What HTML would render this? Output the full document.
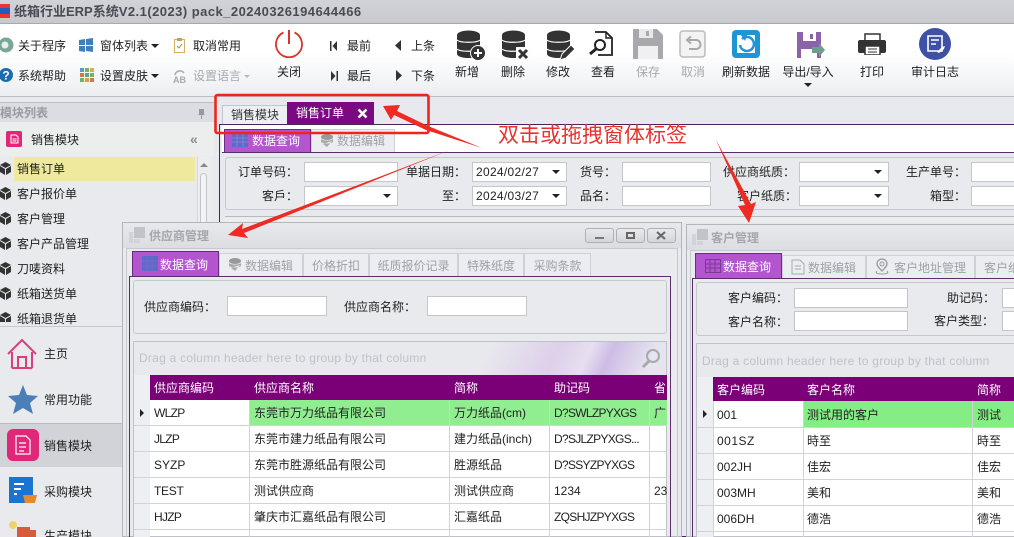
<!DOCTYPE html>
<html><head><meta charset="utf-8">
<style>
html,body{margin:0;padding:0;width:1014px;height:537px;overflow:hidden}
#r{width:1014px;height:537px;overflow:hidden;position:relative;background:#e8e9ee;font-family:"Liberation Sans","Noto Sans CJK SC",sans-serif;font-size:12px;color:#222}
.a,.t,svg{position:absolute}
.t{white-space:nowrap;line-height:16px;height:16px}
.c{text-align:center;transform:translateX(-50%)}
.g{color:#a8a8b0}
.w{color:#fff}
.inp{position:absolute;background:#fff;border:1px solid #c4c6cc;box-sizing:border-box}
.arr:after{content:"";position:absolute;right:6px;top:7px;border:4px solid transparent;border-top:4px solid #222;border-bottom:0}
.tab{position:absolute;background:#ecedf1;border:1px solid #cfd0d6;border-bottom:0;box-sizing:border-box;color:#a0a0a8;line-height:22px;white-space:nowrap}
.on{background:#b455d0;border:1px solid #6d2a80;border-bottom:0;color:#fff}
.panel{position:absolute;background:#e9eaee;border:1px solid #c6c8cc;border-radius:3px;box-sizing:border-box}
.hd{position:absolute;background:#7b0078}
.ln{position:absolute;background:#d2d3d7}
.blk{position:absolute;width:0;height:0}
.n{letter-spacing:-.7px}
</style></head><body><div id="r">

<!-- title bar -->
<div class="a" style="left:0;top:0;width:1014px;height:24px;background:linear-gradient(#d2d3d8,#c8c9ce);border-bottom:1px solid #a8a9ae;box-sizing:border-box"></div>
<div class="a" style="left:0;top:4px;width:10px;height:14px;background:linear-gradient(#e33 0 30%,#235bc0 30% 70%,#e33 70%)"></div>
<div class="t" style="left:14px;top:4px;font-weight:bold;font-size:13px;color:#4a4a55">纸箱行业ERP系统<span style="letter-spacing:.46px">V2.1(2023) pack_20240326194644466</span></div>

<!-- ribbon -->
<div class="a" style="left:0;top:24px;width:1014px;height:73px;background:linear-gradient(#fff 0,#fff 40%,#eceef1 100%);border-bottom:1px solid #bcbdc2;box-sizing:border-box"></div>

<svg style="left:0;top:36px" width="15" height="17"><circle cx="6" cy="9" r="7.500" fill="#7aa898"/><circle cx="5" cy="9" r="3.500" fill="#e8f0ec"/></svg>
<div class="t" style="left:18px;top:38px">关于程序</div>
<svg style="left:78px;top:37px" width="16" height="16"><path d="M1 3l6-1v6H1zM8 2l7-1v7H8zM1 9h6v6l-6-1zM8 9h7v6l-7-1z" fill="#3d7fc0"/></svg>
<div class="t" style="left:100px;top:38px">窗体列表</div>
<div class="blk" style="left:151px;top:44px;border:4px solid transparent;border-top:4px solid #222;border-bottom:0"></div>
<svg style="left:173px;top:37px" width="14" height="17"><rect x="1.500" y="2.500" width="10" height="13" fill="#fff" stroke="#d4b060"/><rect x="4" y="1" width="5" height="3" fill="#c8a050"/><path d="M4 9l2 2 3-4" stroke="#7a9a70" fill="none"/></svg>
<div class="t" style="left:193px;top:38px">取消常用</div>

<svg style="left:0;top:67px" width="14" height="16"><circle cx="6" cy="8" r="7" fill="#1c6db0"/><text x="6" y="12.500" font-size="12" font-weight="bold" fill="#fff" text-anchor="middle" font-family="Liberation Sans">?</text></svg>
<div class="t" style="left:18px;top:68px">系统帮助</div>
<svg style="left:80px;top:68px" width="15" height="15"><rect x="0" y="0" width="4" height="4" fill="#5a9ec0"/><rect x="5" y="0" width="4" height="4" fill="#7ab060"/><rect x="10" y="0" width="4" height="4" fill="#d0b050"/><rect x="0" y="5" width="4" height="4" fill="#c87a50"/><rect x="5" y="5" width="4" height="4" fill="#60a090"/><rect x="10" y="5" width="4" height="4" fill="#7ab060"/><rect x="0" y="10" width="4" height="4" fill="#7ab060"/><rect x="5" y="10" width="4" height="4" fill="#d8a040"/><rect x="10" y="10" width="4" height="4" fill="#c87a50"/></svg>
<div class="t" style="left:100px;top:68px">设置皮肤</div>
<div class="blk" style="left:151px;top:74px;border:4px solid transparent;border-top:4px solid #222;border-bottom:0"></div>
<svg style="left:172px;top:68px" width="16" height="16"><path d="M3 7a5 5 0 0 1 9-2" stroke="#aaa" stroke-width="1.500" fill="none"/><text x="1" y="15" font-size="9" font-weight="bold" fill="#aaa" font-family="Liberation Sans">AB</text></svg>
<div class="t g" style="left:193px;top:68px">设置语言</div>
<div class="blk" style="left:244px;top:75px;border:3px solid transparent;border-top:3px solid #bbb;border-bottom:0"></div>

<svg style="left:274px;top:29px" width="30" height="30"><path d="M9.500 3.500a13 13 0 1 0 11 0" fill="none" stroke="#d8342c" stroke-width="1.800"/><path d="M15 1v14" stroke="#d8342c" stroke-width="2"/></svg>
<div class="t c" style="left:289px;top:64px">关闭</div>

<svg style="left:329px;top:39px" width="10" height="14"><path d="M1 2h1.500v10H1zM8 2v10L3.500 7z" fill="#333"/></svg>
<div class="t" style="left:347px;top:38px">最前</div>
<svg style="left:394px;top:39px" width="8" height="14"><path d="M7 1v11L1 6.500z" fill="#333"/></svg>
<div class="t" style="left:411px;top:38px">上条</div>
<svg style="left:329px;top:69px" width="10" height="14"><path d="M2 2v10l4.500-5zM7.500 2H9v10H7.500z" fill="#333"/></svg>
<div class="t" style="left:347px;top:68px">最后</div>
<svg style="left:395px;top:69px" width="8" height="14"><path d="M1 1v11l6-5.500z" fill="#333"/></svg>
<div class="t" style="left:411px;top:68px">下条</div>

<!-- db icons -->
<svg style="left:456px;top:30px" width="30" height="31"><path d="M1 5a11.500 4.500 0 0 1 23 0v19a11.500 4 0 0 1-23 0z" fill="#333"/><path d="M1 10c3 3 20 3 23 0M1 19c3 3 20 3 23 0" fill="none" stroke="#fff" stroke-width="1.200"/><circle cx="22" cy="23" r="7.500" fill="#333" stroke="#fff"/><path d="M18 23h8M22 19v8" stroke="#fff" stroke-width="2"/></svg>
<div class="t c" style="left:467px;top:64px">新增</div>
<svg style="left:501px;top:30px" width="30" height="31"><path d="M1 5a11.500 4.500 0 0 1 23 0v19a11.500 4 0 0 1-23 0z" fill="#333"/><path d="M1 10c3 3 20 3 23 0M1 19c3 3 20 3 23 0" fill="none" stroke="#fff" stroke-width="1.200"/><rect x="15" y="17" width="15" height="14" fill="#fcfcfd"/><path d="M18 20l8 8M26 20l-8 8" stroke="#333" stroke-width="3"/></svg>
<div class="t c" style="left:513px;top:64px">删除</div>
<svg style="left:546px;top:30px" width="30" height="31"><path d="M1 5a11.500 4.500 0 0 1 23 0v19a11.500 4 0 0 1-23 0z" fill="#333"/><path d="M1 10c3 3 20 3 23 0M1 19c3 3 20 3 23 0" fill="none" stroke="#fff" stroke-width="1.200"/><path d="M14 30l2-6 9-9 4 4-9 9z" fill="#333" stroke="#fff"/></svg>
<div class="t c" style="left:558px;top:64px">修改</div>
<svg style="left:587px;top:30px" width="28" height="28"><path d="M8 2h11l6 6v17H11" fill="none" stroke="#222" stroke-width="1.800"/><path d="M19 2v6h6" fill="none" stroke="#222" stroke-width="1.500"/><circle cx="13" cy="15" r="5" fill="#fff" stroke="#222" stroke-width="2"/><path d="M9 19l-6 5" stroke="#222" stroke-width="3"/></svg>
<div class="t c" style="left:603px;top:64px">查看</div>
<svg style="left:633px;top:29px" width="31" height="31"><path d="M0 0h24l6 6v24H0z" fill="#a9a9ad"/><rect x="6" y="0" width="14" height="9" fill="#e9e9ec"/><rect x="13" y="2" width="3" height="5" fill="#a9a9ad"/><rect x="5" y="17" width="20" height="13" fill="#f0f0f2"/></svg>
<div class="t c g" style="left:648px;top:64px">保存</div>
<svg style="left:679px;top:30px" width="28" height="28"><rect x="1" y="1" width="25" height="26" rx="3" fill="#f3f3f4" stroke="#bbb" stroke-width="1.500"/><path d="M10 10h7a4 4 0 0 1 0 9h-7M12 6.500l-4 3.500 4 3.500" fill="none" stroke="#a8a8a8" stroke-width="2"/></svg>
<div class="t c g" style="left:693px;top:64px">取消</div>
<svg style="left:732px;top:30px" width="29" height="28"><rect x="0" y="0" width="28" height="28" rx="4" fill="#2095d6"/><rect x="5" y="5" width="18" height="18" fill="#fff"/><path d="M10 9a7 7 0 1 1-2 6" fill="none" stroke="#2095d6" stroke-width="2.500"/><path d="M9 5l6 0-2 6z" fill="#2095d6"/></svg>
<div class="t c" style="left:746px;top:64px">刷新数据</div>
<svg style="left:796px;top:31px" width="29" height="29"><path d="M1 1h24v26H1z" fill="#8c62a8"/><rect x="7" y="1" width="13" height="9" fill="#fff"/><rect x="14" y="3" width="3" height="5" fill="#8c62a8"/><rect x="5" y="18" width="16" height="9" fill="#fff"/><path d="M16 16h7v-4l6 7-6 7v-4h-7z" fill="#6da08c"/></svg>
<div class="t c" style="left:808px;top:64px">导出/导入</div>
<div class="blk" style="left:804px;top:83px;border:4px solid transparent;border-top:4px solid #222;border-bottom:0"></div>
<svg style="left:858px;top:33px" width="29" height="22"><rect x="7" y="1" width="15" height="8" fill="#fff" stroke="#333" stroke-width="1.500"/><rect x="0" y="7" width="28" height="13" rx="2" fill="#333"/><rect x="7" y="13" width="15" height="9" fill="#fff" stroke="#333" stroke-width="1.500"/><path d="M10 16h9M10 19h9" stroke="#333"/></svg>
<div class="t c" style="left:872px;top:64px">打印</div>
<svg style="left:919px;top:28px" width="32" height="32"><circle cx="16" cy="16" r="16" fill="#3f51a5"/><path d="M9 8h14v15h-14z" fill="none" stroke="#fff" stroke-width="1.600"/><path d="M12 12h8M12 16h5" stroke="#fff" stroke-width="1.500"/><path d="M18 24l5-5 3-1-1 3-5 4z" fill="#fff"/></svg>
<div class="t c" style="left:935px;top:64px">审计日志</div>

<!-- sidebar -->
<div class="a" style="left:0;top:97px;width:214px;height:440px;background:#e9eaee"></div>
<div class="a" style="left:0;top:102px;width:214px;height:1px;background:#bcbdc2"></div>
<div class="a" style="left:0;top:103px;width:214px;height:19px;background:#dcdde2"></div>
<div class="t" style="left:0;top:105px;color:#9a9aa2;font-weight:bold">模块列表</div>
<svg style="left:197px;top:108px" width="9" height="11"><path d="M2 1h5v5l1 1H1l1-1zM4 7h1v4H4z" fill="#999"/></svg>
<div class="a" style="left:0;top:122px;width:214px;height:34px;background:#eceded"></div>
<svg style="left:6px;top:131px" width="17" height="17"><rect width="16" height="16" rx="2" fill="#e0287a"/><path d="M5 4h5l2 2v6H5zM6.500 8h4M6.500 10h4" fill="none" stroke="#fff"/></svg>
<div class="t" style="left:31px;top:132px">销售模块</div>
<div class="t" style="left:190px;top:131px;color:#8c8c94;font-weight:bold;font-size:14px">«</div>
<div class="a" style="left:14px;top:157px;width:181px;height:24px;background:#eee99c"></div>
<div class="a" style="left:197px;top:157px;width:13px;height:169px;background:#ecedf0;border-left:1px solid #d8d9dd"></div>
<div class="blk" style="left:200px;top:163px;border:4px solid transparent;border-bottom:4px solid #888;border-top:0"></div>
<div class="a" style="left:200px;top:173px;width:7px;height:60px;background:#f3f3f5;border:1px solid #c4c5c9;border-radius:4px;box-sizing:border-box"></div>
<svg style="left:0;top:162px" width="12" height="160"><g fill="#333"><path d="M5.500 0L11 3 5.500 6 0 3zM0 4l5 3v6L0 10zM11 4L6 7v6l5-3z"/><path transform="translate(0 25)" d="M5.500 0L11 3 5.500 6 0 3zM0 4l5 3v6L0 10zM11 4L6 7v6l5-3z"/><path transform="translate(0 50)" d="M5.500 0L11 3 5.500 6 0 3zM0 4l5 3v6L0 10zM11 4L6 7v6l5-3z"/><path transform="translate(0 75)" d="M5.500 0L11 3 5.500 6 0 3zM0 4l5 3v6L0 10zM11 4L6 7v6l5-3z"/><path transform="translate(0 100)" d="M5.500 0L11 3 5.500 6 0 3zM0 4l5 3v6L0 10zM11 4L6 7v6l5-3z"/><path transform="translate(0 125)" d="M5.500 0L11 3 5.500 6 0 3zM0 4l5 3v6L0 10zM11 4L6 7v6l5-3z"/><path transform="translate(0 150)" d="M5.500 0L11 3 5.500 6 0 3zM0 4l5 3v6L0 10zM11 4L6 7v6l5-3z"/></g></svg>
<div class="t" style="left:17px;top:161px">销售订单</div>
<div class="t" style="left:17px;top:186px">客户报价单</div>
<div class="t" style="left:17px;top:211px">客户管理</div>
<div class="t" style="left:17px;top:236px">客户产品管理</div>
<div class="t" style="left:17px;top:261px">刀唛资料</div>
<div class="t" style="left:17px;top:286px">纸箱送货单</div>
<div class="t" style="left:17px;top:311px;height:14px;overflow:hidden">纸箱退货单</div>
<div class="a" style="left:0;top:326px;width:214px;height:1px;background:#c8c9cd"></div>
<div class="a" style="left:0;top:423px;width:122px;height:44px;background:#d2d3d9;border-top:1px solid #b8b9be;box-sizing:border-box"></div>
<svg style="left:7px;top:338px" width="30" height="32"><path d="M1 16L15 2l14 14M5 14v14a1.500 1.500 0 0 0 2 2h16a1.500 1.500 0 0 0 2-2V14M11 30V19h8v11" fill="none" stroke="#d6407e" stroke-width="2"/></svg>
<div class="t" style="left:44px;top:346px">主页</div>
<svg style="left:8px;top:384px" width="30" height="30"><path d="M15 1l4 10 11 1-8 7 3 11-10-6-10 6 3-11-8-7 11-1z" fill="#4a7fb8"/></svg>
<div class="t" style="left:44px;top:392px">常用功能</div>
<svg style="left:7px;top:429px" width="32" height="33"><rect width="32" height="32" rx="6" fill="#e0287a"/><path d="M9 7h10l4 4v14H9zM12 14h7M12 18h7M12 22h5" fill="none" stroke="#fff" stroke-width="1.200"/></svg>
<div class="t" style="left:44px;top:438px">销售模块</div>
<svg style="left:9px;top:477px" width="29" height="30"><rect width="24" height="26" fill="#1b74d2"/><path d="M5 7h10M5 12h7M5 17h3" stroke="#fff" stroke-width="2"/><path d="M14 18h14l-2 8H16z" fill="#e88a2c"/></svg>
<div class="t" style="left:44px;top:484px">采购模块</div>
<svg style="left:7px;top:520px" width="30" height="17"><circle cx="6" cy="5" r="4" fill="#f3d06a"/><path d="M10 7h13v10H10zM23 10h6v7h-6z" fill="#d85a3a"/></svg>
<div class="t" style="left:44px;top:528px">生产模块</div>

<!-- main doc tabs -->
<div class="a" style="left:214px;top:97px;width:800px;height:440px;background:#e8e9ee"></div>
<div class="a" style="left:222px;top:105px;width:66px;height:20px;background:#eeeff2;border:1px solid #c4c5ca;border-bottom:0;box-sizing:border-box;text-align:center;line-height:19px;color:#333">销售模块</div>
<div class="a" style="left:287px;top:102px;width:87px;height:23px;background:#7a0a82;color:#fff;line-height:23px;padding-left:9px;box-sizing:border-box">销售订单</div>
<svg style="left:357px;top:108px" width="11" height="11"><path d="M1.500 1.500l8 8M9.500 1.500l-8 8" stroke="#fff" stroke-width="2.600"/></svg>
<div class="a" style="left:219px;top:124px;width:795px;height:413px;border:1px solid #4a2458;border-right:0;box-sizing:border-box"></div>
<div class="a" style="left:222px;top:125px;width:792px;height:27px;background:#fff"></div>
<div class="a" style="left:222px;top:152px;width:792px;height:1px;background:#5a2e68"></div>
<div class="tab on" style="left:224px;top:129px;width:87px;height:23px;padding-left:27px">数据查询</div>
<svg style="left:232px;top:134px" width="16" height="13"><rect width="16" height="13" fill="#5a6cc8"/><path d="M0 4h16M0 8h16M5 0v13M11 0v13" stroke="#8b7ed8"/></svg>
<div class="tab" style="left:311px;top:129px;width:84px;height:23px;padding-left:25px">数据编辑</div>
<svg style="left:320px;top:134px" width="14" height="14"><ellipse cx="7" cy="3" rx="6" ry="3" fill="#999"/><path d="M1 5c2 2 10 2 12 0v3C11 10 3 10 1 8zM3 10l4 3 5-6" fill="#aaa"/></svg>

<div class="panel" style="left:225px;top:157px;width:800px;height:53px"></div>
<div class="t" style="left:238px;top:164px">订单号码：</div><div class="inp" style="left:304px;top:162px;width:94px;height:20px"></div>
<div class="t" style="left:406px;top:164px">单据日期：</div>
<div class="inp arr" style="left:472px;top:162px;width:95px;height:20px;padding-left:3px;line-height:18px;letter-spacing:.3px">2024/02/27</div>
<div class="t" style="left:580px;top:164px">货号：</div><div class="inp" style="left:622px;top:162px;width:89px;height:20px"></div>
<div class="t" style="left:723px;top:164px">供应商纸质：</div><div class="inp arr" style="left:799px;top:162px;width:90px;height:20px"></div>
<div class="t" style="left:906px;top:164px">生产单号：</div><div class="inp" style="left:971px;top:162px;width:60px;height:20px"></div>
<div class="t" style="left:262px;top:188px">客戶：</div><div class="inp arr" style="left:304px;top:186px;width:94px;height:20px"></div>
<div class="t" style="left:442px;top:188px">至：</div>
<div class="inp arr" style="left:472px;top:186px;width:95px;height:20px;padding-left:3px;line-height:18px;letter-spacing:.3px">2024/03/27</div>
<div class="t" style="left:580px;top:188px">品名：</div><div class="inp" style="left:622px;top:186px;width:89px;height:20px"></div>
<div class="t" style="left:737px;top:188px">客户纸质：</div><div class="inp arr" style="left:799px;top:186px;width:90px;height:20px"></div>
<div class="t" style="left:930px;top:188px">箱型：</div><div class="inp" style="left:971px;top:186px;width:60px;height:20px"></div>
<div class="a" style="left:225px;top:216px;width:789px;height:6px;background:#eceded;border-top:1px solid #b8b9bd;box-sizing:border-box"></div>

<!-- supplier window -->
<div class="a" style="left:122px;top:222px;width:560px;height:315px;background:#e9eaee;border:1px solid #b4b5ba;box-sizing:border-box"></div>
<div class="a" style="left:123px;top:223px;width:558px;height:25px;background:linear-gradient(#e8e9ec,#dcdde1)"></div>
<svg style="left:129px;top:227px" width="17" height="17"><path d="M5 0h11v11H5z" fill="#c2c3c8"/><path d="M0 5h4v11H0zM5 12h6v4H5z" fill="#d2d3d8"/></svg>
<div class="t" style="left:149px;top:228px;font-weight:bold;color:#a5a6ad">供应商管理</div>
<div class="a" style="left:585px;top:228px;width:29px;height:15px;border:1px solid #aeb0b5;border-radius:3px;background:linear-gradient(#e9e9ed,#d4d5da);box-sizing:border-box"></div>
<div class="a" style="left:595px;top:237px;width:9px;height:2px;background:#777"></div>
<div class="a" style="left:616px;top:228px;width:29px;height:15px;border:1px solid #aeb0b5;border-radius:3px;background:linear-gradient(#e9e9ed,#d4d5da);box-sizing:border-box"></div>
<div class="a" style="left:626px;top:232px;width:9px;height:7px;border:2px solid #666;box-sizing:border-box"></div>
<div class="a" style="left:647px;top:228px;width:29px;height:15px;border:1px solid #aeb0b5;border-radius:3px;background:linear-gradient(#e9e9ed,#d4d5da);box-sizing:border-box"></div>
<svg style="left:656px;top:231px" width="11" height="9"><path d="M1 1l8 7M9 1L1 8" stroke="#666" stroke-width="2"/></svg>
<div class="a" style="left:126px;top:248px;width:552px;height:289px;border:1px solid #c8c9ce;border-bottom:0;box-sizing:border-box"></div>

<div class="tab on" style="left:132px;top:251px;width:87px;height:25px;padding-left:27px;line-height:27px">数据查询</div>
<svg style="left:142px;top:256px" width="16" height="15"><rect width="16" height="15" fill="#5a6cc8"/><path d="M0 5h16M0 10h16M5 0v15M10 0v15" stroke="#7a68c8"/></svg>
<div class="tab" style="left:219px;top:253px;width:84px;height:23px;padding-left:25px;line-height:25px">数据编辑</div>
<svg style="left:228px;top:258px" width="14" height="14"><ellipse cx="7" cy="3" rx="6" ry="3" fill="#999"/><path d="M1 5c2 2 10 2 12 0v3C11 10 3 10 1 8zM3 10l4 3 5-6" fill="#aaa"/></svg>
<div class="tab" style="left:303px;top:253px;width:66px;height:23px;text-align:center;line-height:25px">价格折扣</div>
<div class="tab" style="left:369px;top:253px;width:89px;height:23px;text-align:center;line-height:25px">纸质报价记录</div>
<div class="tab" style="left:458px;top:253px;width:66px;height:23px;text-align:center;line-height:25px">特殊纸度</div>
<div class="tab" style="left:524px;top:253px;width:67px;height:23px;text-align:center;line-height:25px">采购条款</div>
<div class="a" style="left:129px;top:276px;width:542px;height:261px;border:1px solid #5a2e68;border-bottom:0;box-sizing:border-box"></div>

<div class="panel" style="left:133px;top:280px;width:534px;height:54px"></div>
<div class="t" style="left:144px;top:299px">供应商编码：</div><div class="inp" style="left:227px;top:296px;width:100px;height:20px"></div>
<div class="t" style="left:344px;top:299px">供应商名称：</div><div class="inp" style="left:427px;top:296px;width:100px;height:20px"></div>

<div class="a" style="left:133px;top:341px;width:534px;height:196px;background:#fff;border:1px solid #c0c1c6;box-sizing:border-box;overflow:hidden">
<div class="a" style="left:0;top:0;width:532px;height:33px;background:linear-gradient(115deg,#e8e9ed 65%,#ddd0ea 78%,#e6dff0 84%,#cdbce6 88%,#e6e4ee 96%)"></div>
</div>
<div class="t" style="left:139px;top:350px;color:#c0c0c8;letter-spacing:.26px">Drag a column header here to group by that column</div>
<svg style="left:640px;top:347px" width="21" height="22"><circle cx="13" cy="9" r="6" fill="none" stroke="#a8a8ae" stroke-width="2"/><path d="M9 14l-6 6" stroke="#a8a8ae" stroke-width="3"/></svg>

<div class="a" style="left:134px;top:375px;width:16px;height:162px;background:#eeeff2"></div>
<div class="hd" style="left:150px;top:375px;width:517px;height:25px"></div>
<div class="a" style="left:250px;top:400px;width:417px;height:25px;background:#90ee90"></div>
<div class="ln" style="left:134px;top:425px;width:533px;height:1px"></div>
<div class="ln" style="left:134px;top:451px;width:533px;height:1px"></div>
<div class="ln" style="left:134px;top:477px;width:533px;height:1px"></div>
<div class="ln" style="left:134px;top:503px;width:533px;height:1px"></div>
<div class="ln" style="left:134px;top:529px;width:533px;height:1px"></div>
<div class="ln" style="left:249px;top:400px;width:1px;height:137px"></div>
<div class="ln" style="left:449px;top:400px;width:1px;height:137px"></div>
<div class="ln" style="left:549px;top:400px;width:1px;height:137px"></div>
<div class="ln" style="left:649px;top:400px;width:1px;height:137px"></div>
<div class="blk" style="left:140px;top:409px;border:4px solid transparent;border-left:4px solid #222;border-right:0"></div>

<div class="t w" style="left:154px;top:380px">供应商编码</div><div class="t w" style="left:254px;top:380px">供应商名称</div><div class="t w" style="left:454px;top:380px">简称</div><div class="t w" style="left:554px;top:380px">助记码</div><div class="t w" style="left:654px;top:380px">省</div>
<div class="t n" style="left:154px;top:405px">WLZP</div><div class="t" style="left:254px;top:405px">东莞市万力纸品有限公司</div><div class="t" style="left:454px;top:405px">万力纸品(cm)</div><div class="t n" style="left:554px;top:405px">D?SWLZPYXGS</div><div class="t" style="left:654px;top:405px">广</div>
<div class="t n" style="left:154px;top:431px">JLZP</div><div class="t" style="left:254px;top:431px">东莞市建力纸品有限公司</div><div class="t" style="left:454px;top:431px">建力纸品(inch)</div><div class="t n" style="left:554px;top:431px">D?SJLZPYXGS...</div>
<div class="t" style="left:154px;top:457px">SYZP</div><div class="t" style="left:254px;top:457px">东莞市胜源纸品有限公司</div><div class="t" style="left:454px;top:457px">胜源纸品</div><div class="t n" style="left:554px;top:457px">D?SSYZPYXGS</div>
<div class="t" style="left:154px;top:483px;letter-spacing:-.3px">TEST</div><div class="t" style="left:254px;top:483px">测试供应商</div><div class="t" style="left:454px;top:483px">测试供应商</div><div class="t" style="left:554px;top:483px">1234</div><div class="t" style="left:654px;top:483px;width:13px;overflow:hidden">23</div>
<div class="t n" style="left:154px;top:509px">HJZP</div><div class="t" style="left:254px;top:509px">肇庆市汇嘉纸品有限公司</div><div class="t" style="left:454px;top:509px">汇嘉纸品</div><div class="t n" style="left:554px;top:509px">ZQSHJZPYXGS</div>

<!-- customer window -->
<div class="a" style="left:686px;top:224px;width:328px;height:313px;background:#e9eaee;border:1px solid #b4b5ba;border-right:0;box-sizing:border-box"></div>
<div class="a" style="left:687px;top:225px;width:327px;height:25px;background:linear-gradient(#e8e9ec,#dcdde1)"></div>
<svg style="left:692px;top:229px" width="17" height="17"><path d="M5 0h11v11H5z" fill="#c2c3c8"/><path d="M0 5h4v11H0zM5 12h6v4H5z" fill="#d2d3d8"/></svg>
<div class="t" style="left:711px;top:230px;font-weight:bold;color:#a5a6ad">客户管理</div>
<div class="a" style="left:690px;top:250px;width:324px;height:287px;border:1px solid #c8c9ce;border-right:0;border-bottom:0;box-sizing:border-box"></div>
<div class="tab on" style="left:695px;top:253px;width:87px;height:25px;padding-left:27px;line-height:27px">数据查询</div>
<svg style="left:705px;top:259px" width="16" height="14"><rect x=".5" y=".5" width="15" height="13" fill="none" stroke="#7a3a90"/><path d="M0 5h16M0 9h16M5 0v14M10 0v14" stroke="#7a3a90"/></svg>
<div class="tab" style="left:782px;top:255px;width:84px;height:23px;padding-left:25px;line-height:25px">数据编辑</div>
<svg style="left:790px;top:259px" width="16" height="16"><path d="M2 1h8l4 4v10H2zM5 7h6M5 10h6" fill="none" stroke="#aaa"/></svg>
<div class="tab" style="left:866px;top:255px;width:109px;height:23px;padding-left:27px;line-height:25px">客户地址管理</div>
<svg style="left:874px;top:258px" width="16" height="18"><path d="M8 13C5 10 3 8 3 6a5 5 0 0 1 10 0c0 2-2 4-5 7z" fill="none" stroke="#999" stroke-width="1.300"/><circle cx="8" cy="6" r="2" fill="none" stroke="#999"/><path d="M3 13c-2 2 0 3 5 3s7-1 5-3" fill="none" stroke="#999"/></svg>
<div class="tab" style="left:975px;top:255px;width:60px;height:23px;padding-left:8px;line-height:25px">客户纸</div>
<div class="a" style="left:692px;top:278px;width:322px;height:259px;border:1px solid #5a2e68;border-right:0;border-bottom:0;box-sizing:border-box"></div>

<div class="panel" style="left:696px;top:282px;width:330px;height:54px"></div>
<div class="t" style="left:728px;top:290px">客户编码：</div><div class="inp" style="left:794px;top:288px;width:114px;height:20px"></div>
<div class="t" style="left:947px;top:290px">助记码：</div><div class="inp" style="left:1002px;top:288px;width:30px;height:20px"></div>
<div class="t" style="left:728px;top:314px">客户名称：</div><div class="inp" style="left:794px;top:311px;width:114px;height:20px"></div>
<div class="t" style="left:934px;top:313px">客户类型：</div><div class="inp" style="left:1002px;top:311px;width:30px;height:20px"></div>

<div class="a" style="left:696px;top:343px;width:330px;height:194px;background:#fff;border:1px solid #c0c1c6;box-sizing:border-box"></div>
<div class="a" style="left:697px;top:344px;width:317px;height:33px;background:#e8e9ed"></div>
<div class="t" style="left:702px;top:353px;color:#c0c0c8;letter-spacing:.26px">Drag a column header here to group by that column</div>
<div class="a" style="left:697px;top:377px;width:16px;height:160px;background:#eeeff2"></div>
<div class="hd" style="left:713px;top:377px;width:301px;height:24px"></div>
<div class="a" style="left:804px;top:401px;width:210px;height:26px;background:#84ee84"></div>
<div class="ln" style="left:697px;top:427px;width:317px;height:1px"></div>
<div class="ln" style="left:697px;top:453px;width:317px;height:1px"></div>
<div class="ln" style="left:697px;top:479px;width:317px;height:1px"></div>
<div class="ln" style="left:697px;top:505px;width:317px;height:1px"></div>
<div class="ln" style="left:697px;top:531px;width:317px;height:1px"></div>
<div class="ln" style="left:713px;top:401px;width:1px;height:136px"></div>
<div class="ln" style="left:803px;top:401px;width:1px;height:136px"></div>
<div class="ln" style="left:972px;top:401px;width:1px;height:136px"></div>
<div class="blk" style="left:703px;top:410px;border:4px solid transparent;border-left:4px solid #222;border-right:0"></div>
<div class="t w" style="left:717px;top:382px">客户编码</div><div class="t w" style="left:807px;top:382px">客户名称</div><div class="t w" style="left:977px;top:382px">简称</div>
<div class="t" style="left:717px;top:407px">001</div><div class="t" style="left:807px;top:407px">测试用的客户</div><div class="t" style="left:977px;top:407px">测试</div>
<div class="t" style="left:717px;top:433px;letter-spacing:.5px">001SZ</div><div class="t" style="left:807px;top:433px">時至</div><div class="t" style="left:977px;top:433px">時至</div>
<div class="t" style="left:717px;top:459px">002JH</div><div class="t" style="left:807px;top:459px">佳宏</div><div class="t" style="left:977px;top:459px">佳宏</div>
<div class="t" style="left:717px;top:485px">003MH</div><div class="t" style="left:807px;top:485px">美和</div><div class="t" style="left:977px;top:485px">美和</div>
<div class="t" style="left:717px;top:511px">006DH</div><div class="t" style="left:807px;top:511px">德浩</div><div class="t" style="left:977px;top:511px">德浩</div>

<!-- annotations -->
<svg style="left:0;top:0;pointer-events:none" width="1014" height="537">
<rect x="215.500" y="95" width="213" height="38" rx="2" fill="none" stroke="#f0241c" stroke-width="2.600"/>
<path d="M383 106L400 105 397 111 428 126 482 148 426 130 394 115 391 120z" fill="#ee2a22"/>
<path d="M228 235L243 223 242 229 450 150 244 233 248 238z" fill="#ee2a22"/>
<path d="M749 223L738 206 745 205 716 140 751 204 756 202z" fill="#ee2a22"/>
</svg>
<div class="t" style="left:498px;top:124px;font-size:21px;line-height:24px;height:24px;color:#e8322e">双击或拖拽窗体标签</div>

</div></body></html>
